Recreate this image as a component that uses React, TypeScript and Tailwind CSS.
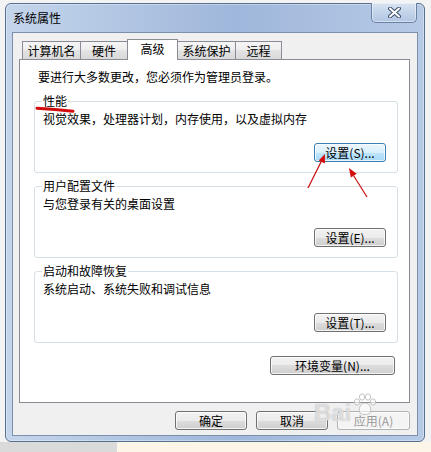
import React from "react";

type BtnProps = {
  label: string;
  w?: string;
  hot?: boolean;
  disabled?: boolean;
};

function WinButton({ label, w = "w-[72px]", hot, disabled }: BtnProps) {
  let look =
    "border-[#707070] text-black bg-[linear-gradient(#f2f2f2,#ebebeb_50%,#dddddd_50%,#cfcfcf)]";
  if (hot)
    look =
      "border-[#3c7fb1] text-black bg-[linear-gradient(#eaf6fd,#d9f0fc_50%,#bee6fd_50%,#a7d9f5)]";
  if (disabled) look = "border-[#adb2b5] text-[#9a9a9a] bg-[#f4f4f4]";
  return (
    <div
      className={`${w} h-[19px] rounded-[3px] border flex items-center justify-center leading-[12px] shadow-[inset_0_0_0_1px_rgba(255,255,255,0.75)] ${look}`}
    >
      {label}
    </div>
  );
}

type GroupProps = {
  title: string;
  desc: string;
  btn: string;
  hot?: boolean;
  className?: string;
};

function Group({ title, desc, btn, hot, className = "" }: GroupProps) {
  return (
    <fieldset
      className={`w-[364px] rounded-[3px] border border-[#d5dfe5] pl-[8px] pr-[11px] pt-[6px] pb-[10px] ${className}`}
    >
      <legend className="-ml-[1px] px-[1px] leading-[12px]">{title}</legend>
      <div className="leading-[12px]">{desc}</div>
      <div className="mt-[18px] flex justify-end">
        <WinButton label={btn} hot={hot} />
      </div>
    </fieldset>
  );
}

const tabs = [
  { name: "计算机名", w: "w-[59px]" },
  { name: "硬件", w: "w-[48px]" },
  { name: "高级", w: "w-[51px]", active: true },
  { name: "系统保护", w: "w-[59px]" },
  { name: "远程", w: "w-[47px]" },
];

function Tabs() {
  return (
    <div className="ml-[9px] mt-[6px] flex h-[20px] items-end">
      {tabs.map((t, i) =>
        t.active ? (
          <div
            key={t.name}
            className={`${t.w} relative z-10 -mb-px -ml-px flex h-[21px] items-center justify-center border border-b-0 border-[#898c95] bg-white pb-[2px]`}
          >
            {t.name}
          </div>
        ) : (
          <div
            key={t.name}
            className={`${t.w} ${i > 0 ? "-ml-px" : ""} flex h-[18px] items-center justify-center border border-b-0 border-[#898c95] bg-[linear-gradient(#f5f5f5,#eeeeee_50%,#e3e3e3_50%,#d9d9d9)]`}
          >
            {t.name}
          </div>
        )
      )}
    </div>
  );
}

function CloseButton() {
  return (
    <div className="mr-[1px] -mt-px flex h-[20px] w-[46px] items-center justify-center rounded-b-[5px] border border-t-0 border-[#6b81a3] bg-[linear-gradient(#d7e3f2,#c3d4ea_50%,#b2c6e3)] shadow-[inset_0_0_0_1px_rgba(255,255,255,0.45)]">
      <svg width="13" height="11" viewBox="0 0 13 11">
        <path
          d="M2 1.5 L11 9.5 M11 1.5 L2 9.5"
          stroke="#3d4e68"
          strokeWidth="4"
          strokeLinecap="round"
        />
        <path
          d="M2 1.5 L11 9.5 M11 1.5 L2 9.5"
          stroke="#ffffff"
          strokeWidth="2"
          strokeLinecap="round"
        />
      </svg>
    </div>
  );
}

function Annotations() {
  return (
    <svg
      className="pointer-events-none absolute left-0 top-0"
      width="431"
      height="452"
      viewBox="0 0 431 452"
    >
      <path
        d="M37 108.2 Q55 109.2 73 111.2"
        stroke="#d20b0b"
        strokeWidth="3"
        strokeLinecap="round"
        fill="none"
      />
      <line x1="308" y1="188" x2="321.5" y2="161" stroke="#c81010" strokeWidth="1.2" />
      <polygon points="325,154 324.9,163.6 318.7,160.4" fill="#d40d0d" />
      <line x1="367" y1="197" x2="353.5" y2="175.5" stroke="#c81010" strokeWidth="1.2" />
      <polygon points="349,168 356.7,173.8 350.8,177.5" fill="#d40d0d" />
    </svg>
  );
}

// faint baidu paw + "Bai" mark sitting over the dialog buttons
function Watermark() {
  return (
    <div className="pointer-events-none absolute left-[314px] top-[393px] flex items-end gap-[1px]">
      <span className="font-['Liberation_Sans',sans-serif] text-[24px] font-bold leading-[24px] text-white/60 [text-shadow:0_0_1px_#a8a8a8]">
        Bai
      </span>
      <svg width="26" height="24" viewBox="0 0 26 24" className="mb-[8px]">
        <g fill="rgba(255,255,255,0.6)" stroke="#b5b5b5" strokeWidth="0.8">
          <ellipse cx="5" cy="9" rx="2.6" ry="3.2" />
          <ellipse cx="10" cy="4" rx="2.6" ry="3.2" />
          <ellipse cx="16" cy="4" rx="2.6" ry="3.2" />
          <ellipse cx="21" cy="9" rx="2.6" ry="3.2" />
          <path d="M13 10 C8 10 6 17 8 20 C10 22 16 22 18 20 C20 17 18 10 13 10 Z" />
        </g>
      </svg>
    </div>
  );
}

export default function App() {
  return (
    <div className="relative h-[452px] w-[431px] overflow-hidden bg-[#f3f3f3] font-['Noto_Sans_CJK_SC',sans-serif] text-[12px] leading-[12px] text-black">
      <div className="pl-[5px] pt-[3px]">
        <div className="flex h-[439px] w-[420px] flex-col rounded-[6px] border border-[#56708f] bg-[linear-gradient(90deg,#c4d5eb,#9fb7db_55%,#b6cae6)] px-[6px] pb-[5px] shadow-[inset_0_0_0_1px_rgba(255,255,255,0.35)]">
          <div className="flex h-[28px] items-start justify-between">
            <span className="ml-[1px] mt-[8px]">系统属性</span>
            <CloseButton />
          </div>
          <div className="flex flex-1 flex-col border border-[#7c90ac] bg-[#f0f0f0]">
            <Tabs />
            <div className="ml-[6px] flex h-[344px] w-[391px] flex-col border border-[#898c95] bg-white pl-[14px] pt-[11px]">
              <div className="ml-[4px]">要进行大多数更改，您必须作为管理员登录。</div>
              <Group
                className="mt-[12px]"
                title="性能"
                desc="视觉效果，处理器计划，内存使用，以及虚拟内存"
                btn="设置(S)..."
                hot
              />
              <Group
                className="mt-[7px]"
                title="用户配置文件"
                desc="与您登录有关的桌面设置"
                btn="设置(E)..."
              />
              <Group
                className="mt-[7px]"
                title="启动和故障恢复"
                desc="系统启动、系统失败和调试信息"
                btn="设置(T)..."
              />
              <div className="mt-[13px] flex w-[364px] justify-end pr-[3px]">
                <WinButton label="环境变量(N)..." w="w-[125px]" />
              </div>
            </div>
            <div className="mt-[8px] flex w-[397px] justify-end gap-[9px]">
              <WinButton label="确定" />
              <WinButton label="取消" />
              <WinButton label="应用(A)" w="w-[73px]" disabled />
            </div>
          </div>
        </div>
      </div>
      <div className="flex h-[10px]">
        <div className="w-[117px] bg-[#dadada]" />
        <div className="flex-1 bg-[#fbf6e7]" />
      </div>
      <Watermark />
      <Annotations />
    </div>
  );
}
